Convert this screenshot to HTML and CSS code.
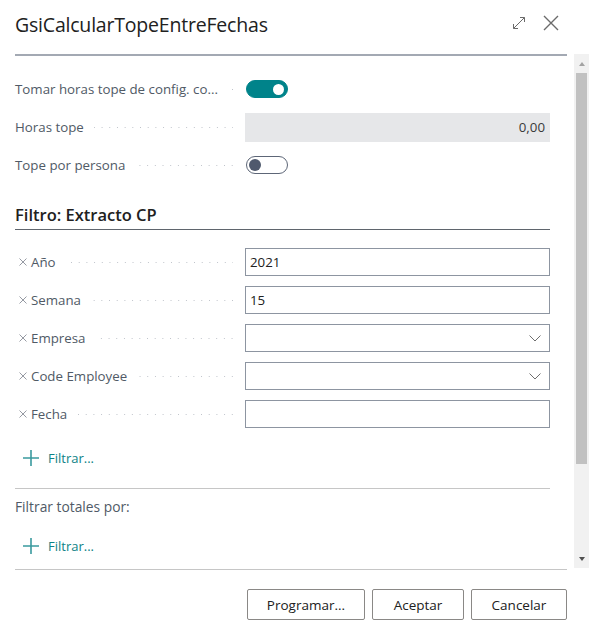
FILE: index.html
```html
<!DOCTYPE html>
<html lang="es">
<head>
<meta charset="utf-8">
<title>GsiCalcularTopeEntreFechas</title>
<link rel="stylesheet" href="styles.css">
</head>
<body>
<div class="dialog">
  <header class="titlebar">
    <h1 class="title">GsiCalcularTopeEntreFechas</h1>
    <div class="title-actions">
      <svg class="icon-expand" width="14" height="14" viewBox="0 0 14 14">
        <path d="M1.5 12.5 L12.5 1.5 M8 1.5 H12.5 V6 M1.5 8 V12.5 H6" fill="none" stroke="#6b6b6b" stroke-width="1"/>
      </svg>
      <svg class="icon-close" width="16" height="16" viewBox="0 0 16 16">
        <path d="M1 1 L15 15 M15 1 L1 15" fill="none" stroke="#6b6b6b" stroke-width="1.4"/>
      </svg>
    </div>
  </header>

  <div class="body">
    <div class="content">
      <div class="panel">
        <div class="group">
          <div class="row">
            <div class="caption"><span class="caption-text">Tomar horas tope de config. co...</span><span class="leader"></span></div>
            <div class="field"><span class="toggle on"><span class="knob"></span></span></div>
          </div>
          <div class="row">
            <div class="caption"><span class="caption-text">Horas tope</span><span class="leader"></span></div>
            <div class="field"><div class="readonly">0,00</div></div>
          </div>
          <div class="row">
            <div class="caption"><span class="caption-text">Tope por persona</span><span class="leader"></span></div>
            <div class="field"><span class="toggle off"><span class="knob"></span></span></div>
          </div>
        </div>

        <h2 class="section-title">Filtro: Extracto CP</h2>

        <div class="group filters">
          <div class="row">
            <div class="caption"><span class="remove"><svg width="8" height="8" viewBox="0 0 8 8"><path d="M0.5 0.5 L7.5 7.5 M7.5 0.5 L0.5 7.5" stroke="#8a8f98" stroke-width="0.9"/></svg></span><span class="caption-text">Año</span><span class="leader"></span></div>
            <div class="field"><div class="input">2021</div></div>
          </div>
          <div class="row">
            <div class="caption"><span class="remove"><svg width="8" height="8" viewBox="0 0 8 8"><path d="M0.5 0.5 L7.5 7.5 M7.5 0.5 L0.5 7.5" stroke="#8a8f98" stroke-width="0.9"/></svg></span><span class="caption-text">Semana</span><span class="leader"></span></div>
            <div class="field"><div class="input">15</div></div>
          </div>
          <div class="row">
            <div class="caption"><span class="remove"><svg width="8" height="8" viewBox="0 0 8 8"><path d="M0.5 0.5 L7.5 7.5 M7.5 0.5 L0.5 7.5" stroke="#8a8f98" stroke-width="0.9"/></svg></span><span class="caption-text">Empresa</span><span class="leader"></span></div>
            <div class="field"><div class="input select"><svg class="chevron" width="12" height="7" viewBox="0 0 12 7"><path d="M0.5 0.5 L6 6 L11.5 0.5" fill="none" stroke="#6e6e6e" stroke-width="1"/></svg></div></div>
          </div>
          <div class="row">
            <div class="caption"><span class="remove"><svg width="8" height="8" viewBox="0 0 8 8"><path d="M0.5 0.5 L7.5 7.5 M7.5 0.5 L0.5 7.5" stroke="#8a8f98" stroke-width="0.9"/></svg></span><span class="caption-text">Code Employee</span><span class="leader"></span></div>
            <div class="field"><div class="input select"><svg class="chevron" width="12" height="7" viewBox="0 0 12 7"><path d="M0.5 0.5 L6 6 L11.5 0.5" fill="none" stroke="#6e6e6e" stroke-width="1"/></svg></div></div>
          </div>
          <div class="row">
            <div class="caption"><span class="remove"><svg width="8" height="8" viewBox="0 0 8 8"><path d="M0.5 0.5 L7.5 7.5 M7.5 0.5 L0.5 7.5" stroke="#8a8f98" stroke-width="0.9"/></svg></span><span class="caption-text">Fecha</span><span class="leader"></span></div>
            <div class="field"><div class="input"></div></div>
          </div>
        </div>

        <div class="add-filter">
          <svg width="16" height="16" viewBox="0 0 16 16"><path d="M8 0 V16 M0 8 H16" stroke="#3a9a9e" stroke-width="1.6"/></svg>
          <span>Filtrar...</span>
        </div>

        <div class="totals">
          <div class="totals-title">Filtrar totales por:</div>
          <div class="add-filter">
            <svg width="16" height="16" viewBox="0 0 16 16"><path d="M8 0 V16 M0 8 H16" stroke="#3a9a9e" stroke-width="1.6"/></svg>
            <span>Filtrar...</span>
          </div>
        </div>
      </div>
    </div>

    <div class="scrollbar">
      <div class="sb-button"><span class="arrow-up"></span></div>
      <div class="sb-track"><div class="sb-thumb"></div></div>
      <div class="sb-button"><span class="arrow-down"></span></div>
    </div>
  </div>

  <footer class="footer">
    <button class="btn btn-program">Programar...</button>
    <button class="btn btn-ok">Aceptar</button>
    <button class="btn btn-cancel">Cancelar</button>
  </footer>
</div>
</body>
</html>
```

FILE: styles.css
```css
* { box-sizing: border-box; }

html, body {
  margin: 0;
  padding: 0;
  background: #ffffff;
}

body {
  font-family: "Open Sans", "Noto Sans", sans-serif;
  color: #212121;
}

.dialog {
  width: 589px;
  height: 643px;
  display: flex;
  flex-direction: column;
  overflow: hidden;
}

/* title bar */
.titlebar {
  height: 54px;
  flex: none;
  display: flex;
  align-items: flex-start;
  justify-content: space-between;
  padding: 0 30px 0 15px;
}

.title {
  margin: 0;
  padding-top: 11px;
  font-size: 19.5px;
  line-height: 28px;
  font-weight: 400;
  color: #212121;
  letter-spacing: -0.2px;
}

.title-actions {
  display: flex;
  align-items: flex-start;
  gap: 17px;
  padding-top: 15px;
}

.icon-expand { margin-top: 1px; }

/* scrolling body */
.body {
  height: 515px;
  flex: none;
  display: flex;
}

.content {
  flex: 1;
  padding-left: 15px;
  overflow: hidden;
}

.panel {
  margin-right: 7px;
  border-top: 2px solid #a3a9b3;
  padding: 14px 17px 0 0;
}

.row {
  height: 38px;
  display: grid;
  grid-template-columns: 1fr 305px;
  column-gap: 12px;
  align-items: center;
}

.caption {
  display: flex;
  align-items: center;
  min-width: 0;
  font-size: 13.3px;
  color: #505a66;
  white-space: nowrap;
}

.caption-text { flex: none; }

.leader {
  flex: 1;
  height: 2px;
  margin-left: 10px;
  margin-top: 2px;
  background-image: linear-gradient(to left, #bfc3ca 0 1.2px, transparent 1.2px 7.7px);
  background-size: 7.7px 1.2px;
  background-repeat: repeat-x;
  background-position: right center;
}

.field {
  display: flex;
  align-items: center;
}

/* toggles */
.toggle {
  width: 42px;
  height: 18px;
  border-radius: 9px;
  display: flex;
  align-items: center;
  margin-left: 1px;
}

.toggle.on {
  background: #00838a;
  border: 1px solid #00838a;
  justify-content: flex-end;
  padding-right: 3px;
}

.toggle.on .knob {
  width: 11px;
  height: 11px;
  border-radius: 50%;
  background: #ffffff;
}

.toggle.off {
  background: #ffffff;
  border: 1px solid #5d6677;
  padding-left: 2px;
}

.toggle.off .knob {
  width: 12px;
  height: 12px;
  border-radius: 50%;
  background: #4f596d;
}

.readonly {
  width: 100%;
  height: 29px;
  background: #e6e7e9;
  font-size: 13.3px;
  line-height: 29px;
  text-align: right;
  padding-right: 5px;
  color: #3a3a3a;
}

.input {
  width: 100%;
  height: 28px;
  border: 1px solid #8d95a1;
  font-size: 13.3px;
  line-height: 26px;
  padding-left: 4px;
  color: #212121;
  display: flex;
  align-items: center;
}

.input.select { justify-content: flex-end; padding-right: 8px; }
.chevron { margin-top: 1px; }

/* section heading */
.section-title {
  margin: 20px 0 0;
  font-size: 16.5px;
  line-height: 22px;
  font-weight: 600;
  color: #212121;
  padding-bottom: 3px;
  border-bottom: 1px solid #5f656d;
}

.filters { margin-top: 13px; }

.remove {
  display: inline-flex;
  width: 16px;
  padding-left: 4px;
  flex: none;
}

.add-filter {
  display: flex;
  align-items: center;
  gap: 9px;
  padding-left: 8px;
  margin-top: 15px;
  height: 20px;
  font-size: 13px;
  color: #0d8286;
}

.totals {
  margin-top: 20px;
  border-top: 1px solid #c6c6c6;
  padding-top: 8px;
}

.totals-title {
  font-size: 13.8px;
  line-height: 20px;
  color: #505a66;
}

.totals .add-filter { margin-top: 19px; }

/* scrollbar */
.scrollbar {
  width: 15px;
  height: 514px;
  flex: none;
  background: #f1f1f1;
  display: flex;
  flex-direction: column;
}

.sb-button {
  height: 17px;
  flex: none;
  display: flex;
  align-items: center;
  justify-content: center;
}

.arrow-up {
  width: 0;
  height: 0;
  border-left: 3.5px solid transparent;
  border-right: 3.5px solid transparent;
  border-bottom: 4px solid #a3a3a3;
  margin-top: 3px;
}

.arrow-down {
  width: 0;
  height: 0;
  border-left: 3.5px solid transparent;
  border-right: 3.5px solid transparent;
  border-top: 4px solid #505050;
  margin-bottom: 2px;
}

.sb-track {
  flex: 1;
  padding: 2px 2px 0 2px;
}

.sb-thumb {
  height: 391px;
  background: #c1c1c1;
}

/* footer */
.footer {
  margin: 0 22px 0 15px;
  border-top: 1px solid #c6c6c6;
  padding-top: 19px;
  display: flex;
  justify-content: flex-end;
  gap: 7px;
}

.btn {
  height: 31px;
  background: #ffffff;
  border: 1px solid #8a8886;
  border-radius: 2px;
  font-family: "Open Sans", "Noto Sans", sans-serif;
  font-size: 13.5px;
  color: #212121;
  padding: 0;
}

.btn-program { width: 118px; }
.btn-ok { width: 92px; }
.btn-cancel { width: 96px; }
```
